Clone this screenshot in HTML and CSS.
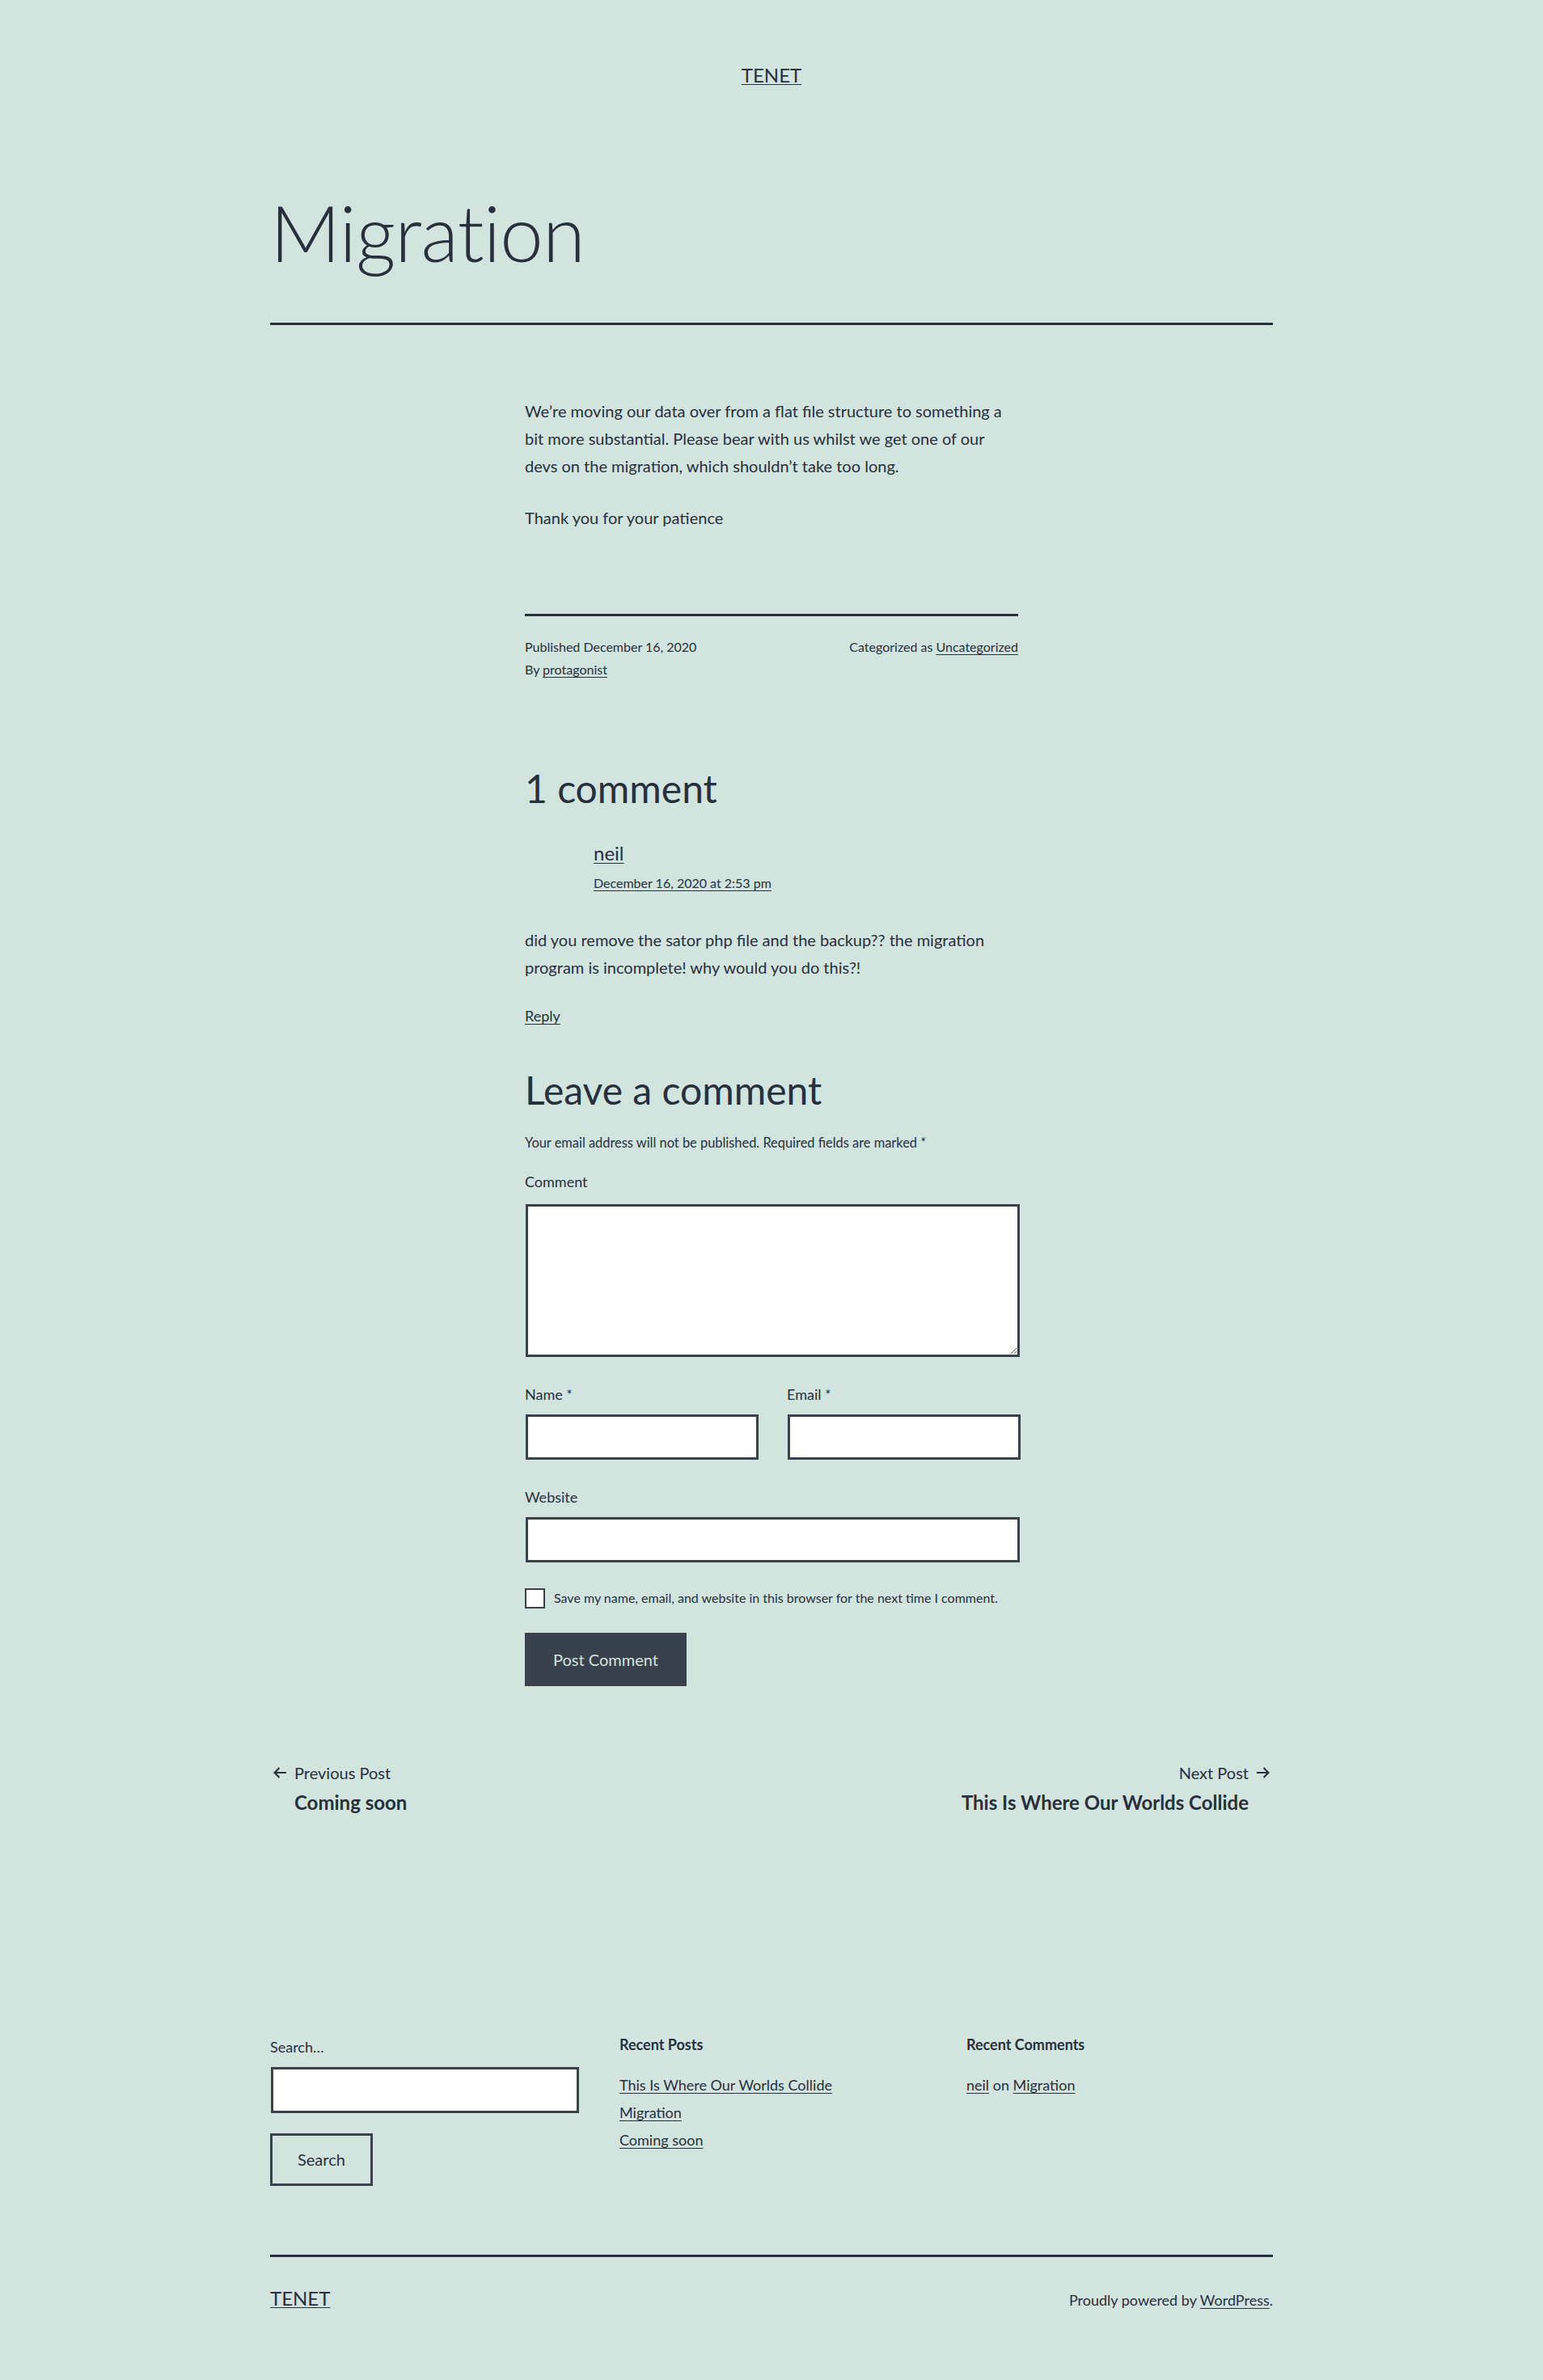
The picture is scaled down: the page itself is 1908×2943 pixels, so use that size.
FILE: index.html
```html
<!DOCTYPE html>
<html lang="en">
<head>
<meta charset="utf-8">
<title>Migration – TENET</title>
<link rel="stylesheet" href="styles.css">
</head>
<body>
<header class="site-header">
  <a class="site-title" href="#">TENET</a>
</header>

<main class="site-main">
  <article class="post">
    <header class="entry-header">
      <h1 class="entry-title">Migration</h1>
    </header>
    <div class="entry-content">
      <p>We’re moving our data over from a flat file structure to something a bit more substantial. Please bear with us whilst we get one of our devs on the migration, which shouldn’t take too long.</p>
      <p>Thank you for your patience</p>
    </div>
    <footer class="entry-footer">
      <div class="posted-by">
        <span class="posted-on">Published December 16, 2020</span>
        <span class="byline">By <a href="#">protagonist</a></span>
      </div>
      <div class="cat-links">Categorized as <a href="#">Uncategorized</a></div>
    </footer>
  </article>

  <section class="comments-area">
    <h2 class="comments-title">1 comment</h2>
    <div class="comment">
      <div class="comment-meta">
        <a class="comment-author" href="#">neil</a>
        <a class="comment-date" href="#">December 16, 2020 at 2:53 pm</a>
      </div>
      <p class="comment-text">did you remove the sator php file and the backup?? the migration program is incomplete! why would you do this?!</p>
      <div class="reply"><a class="comment-reply" href="#">Reply</a></div>
    </div>

    <div class="respond">
      <h2 class="reply-title">Leave a comment</h2>
      <p class="comment-notes">Your email address will not be published. Required fields are marked *</p>
      <form class="comment-form">
        <label class="field-label label-comment">Comment</label>
        <textarea class="field-textarea"></textarea>
        <div class="field-row">
          <div class="field-col">
            <label class="field-label">Name *</label>
            <input class="field-input" type="text">
          </div>
          <div class="field-col">
            <label class="field-label">Email *</label>
            <input class="field-input" type="text">
          </div>
        </div>
        <label class="field-label label-website">Website</label>
        <input class="field-input" type="text">
        <div class="cookies">
          <span class="checkbox"></span>
          <span class="cookies-text">Save my name, email, and website in this browser for the next time I comment.</span>
        </div>
        <div class="form-submit"><span class="submit-btn">Post Comment</span></div>
      </form>
    </div>
  </section>

  <nav class="post-navigation">
    <a class="nav-previous" href="#">
      <span class="meta-nav"><svg class="arrow" viewBox="0 0 24 24" width="24" height="24"><path d="M20 13v-2H8l4-4-1-2-7 7 7 7 1-2-4-4z"/></svg>Previous Post</span>
      <span class="post-title">Coming soon</span>
    </a>
    <a class="nav-next" href="#">
      <span class="meta-nav">Next Post<svg class="arrow" viewBox="0 0 24 24" width="24" height="24"><path d="m4 13v-2h12l-4-4 1-2 7 7-7 7-1-2 4-4z"/></svg></span>
      <span class="post-title">This Is Where Our Worlds Collide</span>
    </a>
  </nav>
</main>

<aside class="widget-area">
  <div class="widget widget-search">
    <div class="search-label">Search…</div>
    <div class="search-input"></div>
    <span class="search-btn">Search</span>
  </div>
  <div class="widget">
    <h2 class="widget-title">Recent Posts</h2>
    <ul class="widget-list">
      <li><a href="#">This Is Where Our Worlds Collide</a></li>
      <li><a href="#">Migration</a></li>
      <li><a href="#">Coming soon</a></li>
    </ul>
  </div>
  <div class="widget">
    <h2 class="widget-title">Recent Comments</h2>
    <ul class="widget-list">
      <li><a href="#">neil</a> on <a href="#">Migration</a></li>
    </ul>
  </div>
</aside>

<footer class="site-footer">
  <a class="footer-title" href="#">TENET</a>
  <div class="powered-by">Proudly powered by <a href="#">WordPress</a>.</div>
</footer>
</body>
</html>
```

FILE: styles.css
```css
* { box-sizing: border-box; }

html, body {
  margin: 0;
  padding: 0;
}

body {
  background: #d1e4dd;
  color: #28303d;
  font-family: Lato, "Liberation Sans", sans-serif;
  font-size: 20px;
  line-height: 34px;
}

a {
  color: #28303d;
  text-decoration: underline;
  text-decoration-thickness: 1px;
  text-underline-offset: 3px;
}

/* Header */
.site-header {
  padding-top: 76px;
  text-align: center;
}

.site-title {
  font-size: 24px;
  line-height: 34px;
  text-transform: uppercase;
  text-underline-offset: 2px;
}

/* Article */
.site-main {
  width: 1240px;
  margin: 0 auto;
}

.entry-header {
  margin-top: 123px;
  padding-bottom: 59px;
  border-bottom: 3px solid #28303d;
}

.entry-title {
  margin: 0;
  font-size: 96px;
  line-height: 106px;
  font-weight: 300;
  letter-spacing: -0.8px;
}

.entry-content,
.entry-footer,
.comments-area {
  width: 610px;
  margin-left: auto;
  margin-right: auto;
}

.entry-content {
  margin-top: 89px;
}

.entry-content p {
  margin: 0 0 30px;
}

.entry-content p:last-child {
  margin-bottom: 0;
}

.entry-footer {
  margin-top: 102px;
  border-top: 3px solid #28303d;
  padding-top: 24px;
  display: flex;
  justify-content: space-between;
  align-items: flex-start;
  font-size: 16px;
  line-height: 28px;
}

.posted-by {
  display: flex;
  flex-direction: column;
}

/* Comments */
.comments-title,
.reply-title {
  margin: 0;
  font-size: 48px;
  line-height: 62px;
  font-weight: 400;
}

.comments-title {
  margin-top: 102px;
}

.comment-meta {
  margin-top: 32px;
  padding-left: 85px;
  display: flex;
  flex-direction: column;
  align-items: flex-start;
}

.comment-author {
  font-size: 24px;
  line-height: 34px;
}

.comment-date {
  margin-top: 6px;
  font-size: 16px;
  line-height: 28px;
}

.comment-text {
  margin: 39px 0 0;
}

.reply {
  margin-top: 29px;
  font-size: 18px;
  line-height: 28px;
}

.reply-title {
  margin-top: 47px;
}

.comment-notes {
  margin: 20px 0 0;
  font-size: 16.4px;
  line-height: 28px;
}

.comment-form {
  display: flex;
  flex-direction: column;
}

.field-label {
  display: block;
  font-size: 18px;
  line-height: 28px;
}

.label-comment {
  margin-top: 20px;
}

.field-textarea {
  display: block;
  margin: 14px 0 0 1px;
  width: 611px;
  height: 189px;
  border: 3px solid #39414d;
  background: #fff;
  border-radius: 0;
  resize: vertical;
  font-family: inherit;
}

.field-row {
  margin-top: 32px;
  display: grid;
  grid-template-columns: 288px 288px;
  column-gap: 36px;
}

.field-input {
  display: block;
  margin: 11px 0 0 1px;
  width: 100%;
  height: 56px;
  border: 3px solid #39414d;
  background: #fff;
  border-radius: 0;
  padding: 10px;
  font-family: inherit;
  font-size: 20px;
}

.comment-form > .field-input {
  width: 611px;
}

.label-website {
  margin-top: 32px;
}

.cookies {
  margin-top: 30px;
  display: flex;
  align-items: center;
  gap: 11px;
}

.checkbox {
  width: 25px;
  height: 25px;
  flex: none;
  border: 2px solid #39414d;
  background: #fff;
}

.cookies-text {
  font-size: 16px;
  line-height: 28px;
}

.form-submit {
  margin-top: 29px;
  display: flex;
}

.submit-btn {
  display: block;
  background: #39414d;
  color: #d1e4dd;
  border: 3px solid #39414d;
  padding: 15px 32px;
  font-size: 20px;
  line-height: 30px;
}

/* Post navigation */
.post-navigation {
  margin-top: 93px;
  display: flex;
  justify-content: space-between;
  align-items: flex-start;
}

.nav-previous,
.nav-next {
  display: flex;
  flex-direction: column;
  text-decoration: none;
}

.nav-next {
  align-items: flex-end;
}

.meta-nav {
  display: flex;
  align-items: center;
  gap: 6px;
  font-size: 20px;
  line-height: 28px;
}

.arrow {
  fill: #28303d;
  flex: none;
}

.post-title {
  margin-top: 6px;
  font-size: 24px;
  line-height: 34px;
  font-weight: 700;
}

.nav-previous .post-title {
  padding-left: 30px;
}

.nav-next .post-title {
  padding-right: 30px;
}

/* Widgets */
.widget-area {
  width: 1240px;
  margin: 270px auto 0;
  display: grid;
  grid-template-columns: repeat(3, 1fr);
  column-gap: 50px;
  align-items: start;
}

.widget-search {
  display: flex;
  flex-direction: column;
  align-items: flex-start;
}

.search-label {
  margin-top: 3px;
  font-size: 18px;
  line-height: 24px;
}

.search-input {
  margin: 13px 0 0 1px;
  width: 381px;
  height: 57px;
  border: 3px solid #39414d;
  background: #fff;
}

.search-btn {
  display: block;
  margin-top: 25px;
  border: 3px solid #39414d;
  padding: 15px 31px;
  font-size: 20px;
  line-height: 29px;
}

.widget-title {
  margin: 0;
  font-size: 18px;
  line-height: 24px;
  font-weight: 700;
}

.widget-list {
  list-style: none;
  margin: 21px 0 0;
  padding: 0;
  font-size: 18px;
  line-height: 34px;
}

/* Footer */
.site-footer {
  width: 1240px;
  margin: 85px auto 0;
  border-top: 3px solid #28303d;
  padding: 34px 0 83px;
  display: flex;
  justify-content: space-between;
  align-items: baseline;
}

.footer-title {
  font-size: 24px;
  line-height: 34px;
  text-underline-offset: 2px;
}

.powered-by {
  font-size: 18px;
  line-height: 28px;
}
```
